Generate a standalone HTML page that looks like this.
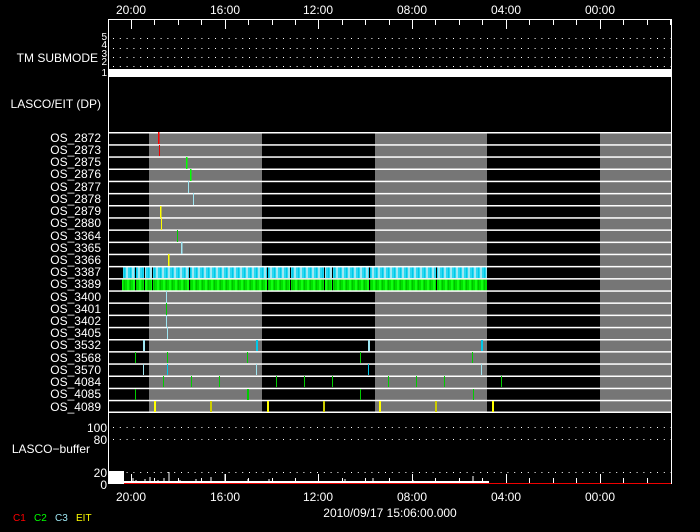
<!DOCTYPE html>
<html><head><style>
html,body{margin:0;padding:0;background:#000;}
body{width:700px;height:532px;overflow:hidden;position:relative;font-family:"Liberation Sans",sans-serif;}
svg{display:block;}
svg text{font-family:"Liberation Sans",sans-serif;font-size:12px;fill:#fff;}
</style></head><body>
<svg width="700" height="532" xmlns="http://www.w3.org/2000/svg">
<defs>
<pattern id="cy" width="6" height="12" patternUnits="userSpaceOnUse">
<rect width="6" height="12" fill="#2ad8f0"/><rect x="0" width="2" height="12" fill="#9ee6f2"/><rect x="4" width="1" height="12" fill="#00c8e8"/>
</pattern>
<pattern id="gr" width="6" height="12" patternUnits="userSpaceOnUse">
<rect width="6" height="12" fill="#00e000"/><rect x="1" width="2" height="12" fill="#10ff10"/><rect x="4" width="1" height="12" fill="#00c000"/>
</pattern>
</defs>
<g text-anchor="middle">
<text x="131" y="14">20:00</text><text x="225" y="14">16:00</text><text x="318" y="14">12:00</text>
<text x="412" y="14">08:00</text><text x="506" y="14">04:00</text><text x="600" y="14">00:00</text>
</g>
<rect x="108.5" y="19.5" width="563" height="464" fill="none" stroke="#fff"/>
<g stroke="#fff" stroke-width="1">
<path d="M131.5 20v9M225.5 20v9M318.5 20v9M412.5 20v9M506.5 20v9M600.5 20v9"/>
<path d="M154.5 20v5M178.5 20v5M201.5 20v5M248.5 20v5M272.5 20v5M295.5 20v5M342.5 20v5M365.5 20v5M389.5 20v5M435.5 20v5M459.5 20v5M482.5 20v5M529.5 20v5M553.5 20v5M576.5 20v5M623.5 20v5M647.5 20v5M670.5 20v5"/>
<path d="M131.5 483v-9M225.5 483v-9M318.5 483v-9M412.5 483v-9M506.5 483v-9M600.5 483v-9"/>
<path d="M154.5 483v-5M178.5 483v-5M201.5 483v-5M248.5 483v-5M272.5 483v-5M295.5 483v-5M342.5 483v-5M365.5 483v-5M389.5 483v-5M435.5 483v-5M459.5 483v-5M482.5 483v-5M529.5 483v-5M553.5 483v-5M576.5 483v-5M623.5 483v-5M647.5 483v-5"/>
</g>
<g stroke="#fff" stroke-width="1" stroke-dasharray="1 5.8">
<path d="M113 38.5H671M113 48.5H671M113 57.5H671M113 66.5H671M113 427.5H671M113 439.5H671M113 472.5H671"/>
</g>
<rect x="109" y="69" width="562" height="8" fill="#fff"/>
<text x="98" y="62" text-anchor="end">TM SUBMODE</text>
<g text-anchor="end"><text x="107" y="40" style="font-size:10px">5</text><text x="107" y="48" style="font-size:10px">4</text><text x="107" y="57" style="font-size:10px">3</text><text x="107" y="65" style="font-size:10px">2</text><text x="107" y="76" style="font-size:10px">1</text></g>
<text x="101" y="108" text-anchor="end">LASCO/EIT (DP)</text>
<g fill="#767676">
<rect x="149" y="132" width="113" height="280"/>
<rect x="375" y="132" width="112" height="280"/>
<rect x="600" y="132" width="71" height="280"/>
</g>
<rect x="123" y="267" width="364" height="11" fill="url(#cy)"/>
<rect x="122" y="279" width="365" height="12" fill="url(#gr)"/>
<g fill="#000"><rect x="135" y="267" width="1" height="24"/><rect x="144" y="267" width="1" height="24"/><rect x="152" y="267" width="1" height="24"/><rect x="189" y="267" width="1" height="24"/><rect x="267" y="267" width="1" height="24"/><rect x="290" y="267" width="1" height="24"/><rect x="324" y="267" width="1" height="24"/><rect x="332" y="267" width="1" height="24"/><rect x="369" y="267" width="1" height="24"/><rect x="436" y="267" width="1" height="24"/></g>
<g fill="#fff">
<rect x="109" y="132" width="562" height="1.5"/><rect x="109" y="144.2" width="562" height="1.5"/><rect x="109" y="156.3" width="562" height="1.5"/><rect x="109" y="168.5" width="562" height="1.5"/><rect x="109" y="180.7" width="562" height="1.5"/><rect x="109" y="192.9" width="562" height="1.5"/><rect x="109" y="205" width="562" height="1.5"/><rect x="109" y="217.2" width="562" height="1.5"/><rect x="109" y="229.4" width="562" height="1.5"/><rect x="109" y="241.6" width="562" height="1.5"/><rect x="109" y="253.7" width="562" height="1.5"/><rect x="109" y="265.9" width="562" height="1.5"/><rect x="109" y="278.1" width="562" height="1.5"/><rect x="109" y="290.3" width="562" height="1.5"/><rect x="109" y="302.4" width="562" height="1.5"/><rect x="109" y="314.6" width="562" height="1.5"/><rect x="109" y="326.8" width="562" height="1.5"/><rect x="109" y="339" width="562" height="1.5"/><rect x="109" y="351.1" width="562" height="1.5"/><rect x="109" y="363.3" width="562" height="1.5"/><rect x="109" y="375.5" width="562" height="1.5"/><rect x="109" y="387.7" width="562" height="1.5"/><rect x="109" y="399.8" width="562" height="1.5"/><rect x="109" y="411.5" width="562" height="1.5"/>
</g>
<g>
<rect x="158" y="132" width="1.5" height="12" fill="#f00"/>
<rect x="159" y="145" width="1" height="11" fill="#e00"/>
<rect x="186" y="157" width="1.5" height="12" fill="#0f0"/>
<rect x="190" y="169" width="1.5" height="12" fill="#0f0"/>
<rect x="188" y="181" width="1" height="12" fill="#9ee6f2"/>
<rect x="193" y="193" width="1" height="12" fill="#9ee6f2"/>
<rect x="160" y="206" width="1.5" height="12" fill="#ff0"/>
<rect x="161" y="218" width="1" height="12" fill="#ff0"/>
<rect x="177" y="230" width="1" height="12" fill="#0c0"/>
<rect x="181" y="242" width="1.5" height="12" fill="#9ee6f2"/>
<rect x="168" y="254" width="1.5" height="12" fill="#ff0"/>
<rect x="166" y="291" width="1" height="12" fill="#9ee6f2"/>
<rect x="166" y="303" width="1" height="12" fill="#0c0"/>
<rect x="166" y="315" width="1" height="12" fill="#9ee6f2"/>
<rect x="167" y="327" width="1" height="12" fill="#9ee6f2"/>
<g fill="#9ee6f2"><rect x="143" y="340" width="2" height="11"/><rect x="256" y="340" width="2" height="11" fill="#00c8e8"/><rect x="368" y="340" width="2" height="11"/><rect x="481" y="340" width="2" height="11" fill="#00c8e8"/></g>
<g fill="#0c0"><rect x="135" y="352" width="1" height="11"/><rect x="167" y="352" width="1" height="11"/><rect x="247" y="352" width="1" height="11"/><rect x="360" y="352" width="1" height="11"/><rect x="472" y="352" width="1" height="11"/></g>
<g fill="#9ee6f2"><rect x="143" y="364" width="1" height="11"/><rect x="167" y="364" width="1" height="11" fill="#00c8e8"/><rect x="256" y="364" width="1" height="11"/><rect x="368" y="364" width="1" height="11" fill="#00c8e8"/><rect x="481" y="364" width="1" height="11"/></g>
<g fill="#0c0"><rect x="163" y="376" width="1" height="11"/><rect x="191" y="376" width="1" height="11"/><rect x="219" y="376" width="1" height="11"/><rect x="276" y="376" width="1" height="11"/><rect x="304" y="376" width="1" height="11"/><rect x="332" y="376" width="1" height="11"/><rect x="388" y="376" width="1" height="11"/><rect x="416" y="376" width="1" height="11"/><rect x="444" y="376" width="1" height="11"/><rect x="501" y="376" width="1" height="11"/></g>
<g fill="#0c0"><rect x="135" y="389" width="1" height="11"/><rect x="247" y="389" width="2" height="11"/><rect x="360" y="389" width="1" height="11"/><rect x="473" y="389" width="1" height="11"/></g>
<g fill="#ff0"><rect x="154" y="401" width="2" height="11"/><rect x="210" y="401" width="2" height="11" fill="#cc0"/><rect x="267" y="401" width="2" height="11"/><rect x="323" y="401" width="2" height="11" fill="#cc0"/><rect x="379" y="401" width="2" height="11"/><rect x="435" y="401" width="2" height="11" fill="#cc0"/><rect x="492" y="401" width="2" height="11"/></g>
</g>
<g text-anchor="end">
<text x="101" y="142">OS_2872</text><text x="101" y="154">OS_2873</text><text x="101" y="166">OS_2875</text><text x="101" y="178">OS_2876</text><text x="101" y="191">OS_2877</text><text x="101" y="203">OS_2878</text><text x="101" y="215">OS_2879</text><text x="101" y="227">OS_2880</text><text x="101" y="240">OS_3364</text><text x="101" y="252">OS_3365</text><text x="101" y="264">OS_3366</text><text x="101" y="276">OS_3387</text><text x="101" y="288">OS_3389</text><text x="101" y="301">OS_3400</text><text x="101" y="313">OS_3401</text><text x="101" y="325">OS_3402</text><text x="101" y="337">OS_3405</text><text x="101" y="349">OS_3532</text><text x="101" y="362">OS_3568</text><text x="101" y="374">OS_3570</text><text x="101" y="386">OS_4084</text><text x="101" y="398">OS_4085</text><text x="101" y="411">OS_4089</text>
</g>
<g text-anchor="end"><text x="107" y="432">100</text><text x="107" y="444">80</text><text x="107" y="477">20</text><text x="107" y="489">0</text></g>
<text x="90" y="453" text-anchor="end">LASCO−buffer</text>
<rect x="109" y="471" width="15" height="12" fill="#fff"/>
<rect x="124" y="481" width="365" height="2" fill="#fff"/>
<path d="M133 478v4M136 480v3M145 479v4M150 477v6M158 480v3M164 478v5M169 472v11M180 480v3M196 479v4M211 477v6M225 474v9M248 479v4M269 479v4M296 481v2M345 479v4M373 478v5M413 480v2M424 481v2M473 476v7" stroke="#fff"/>
<rect x="124" y="483" width="547" height="1" fill="#e00"/>
<g text-anchor="middle">
<text x="131" y="501">20:00</text><text x="225" y="501">16:00</text><text x="318" y="501">12:00</text>
<text x="412" y="501">08:00</text><text x="506" y="501">04:00</text><text x="600" y="501">00:00</text>
</g>
<text x="390" y="517" text-anchor="middle">2010/09/17 15:06:00.000</text>
<text x="13" y="521" style="fill:#f00;font-size:10px">C1</text>
<text x="34" y="521" style="fill:#0f0;font-size:10px">C2</text>
<text x="55" y="521" style="fill:#9ee6f2;font-size:10px">C3</text>
<text x="76" y="521" style="fill:#ff0;font-size:10px">EIT</text>
</svg>
</body></html>
